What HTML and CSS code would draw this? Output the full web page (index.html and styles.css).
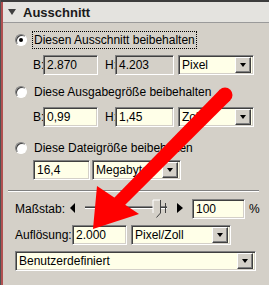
FILE: index.html
```html
<!DOCTYPE html>
<html>
<head>
<meta charset="utf-8">
<link rel="stylesheet" href="styles.css">
</head>
<body>
<div class="win">
  <div class="topbar"></div>
  <div class="panel">
    <div class="header">
      <span class="caret"></span>
      <span class="title">Ausschnitt</span>
    </div>
    <div class="body">
      <div class="radio-row r1">
        <span class="radio checked"></span>
        <span class="rlabel focus">Diesen Ausschnitt beibehalten</span>
      </div>
      <div class="frow f1">
        <span class="key">B:</span>
        <span class="field dis wb">2.870</span>
        <span class="key kh">H:</span>
        <span class="field dis wh">4.203</span>
        <span class="select ws"><span class="val">Pixel</span><span class="btn"></span></span>
      </div>

      <div class="radio-row r2">
        <span class="radio"></span>
        <span class="rlabel">Diese Ausgabegröße beibehalten</span>
      </div>
      <div class="frow f2">
        <span class="key">B:</span>
        <span class="field wb">0,99</span>
        <span class="key kh">H:</span>
        <span class="field wh">1,45</span>
        <span class="select ws"><span class="val">Zoll</span><span class="btn"></span></span>
      </div>

      <div class="radio-row r3">
        <span class="radio"></span>
        <span class="rlabel">Diese Dateigröße beibehalten</span>
      </div>
      <div class="frow f3">
        <span class="field wfs">16,4</span>
        <span class="select wms"><span class="val">Megabytes</span><span class="btn"></span></span>
      </div>

      <div class="sep"></div>

      <div class="crow c1">
        <span class="clabel">Maßstab:</span>
        <svg class="slider" width="120" height="20" viewBox="0 0 120 20">
          <polygon points="8,4 8,14 3,9" fill="#000"/>
          <rect x="18" y="7" width="82" height="1" fill="#808080"/>
          <rect x="18" y="8" width="82" height="1" fill="#404040"/>
          <rect x="18" y="9" width="82" height="1" fill="#ffffff"/>
          <rect x="98" y="4" width="1" height="10" fill="#404040"/>
          <polygon points="86,1 93,1 93,14 89.5,18 86,14" fill="#d4d0c8"/>
          <polyline points="86,14 86,1 93,1" fill="none" stroke="#ffffff" stroke-width="1"/>
          <polyline points="93.5,1 93.5,14 89.5,18.5" fill="none" stroke="#404040" stroke-width="1"/>
          <polygon points="110,4 110,14 116,9" fill="#000"/>
        </svg>
        <span class="field wz">100</span>
        <span class="pct">%</span>
      </div>

      <div class="crow c2">
        <span class="clabel2">Auflösung:</span>
        <span class="field wa">2.000</span>
        <span class="select wp"><span class="val">Pixel/Zoll</span><span class="btn"></span></span>
      </div>

      <div class="crow c3">
        <span class="select wfull"><span class="val">Benutzerdefiniert</span><span class="btn"></span></span>
      </div>
    </div>
  </div>
  <svg class="arrow" width="269" height="285" viewBox="0 0 269 285">
    <circle cx="225" cy="95" r="7.5" fill="#ff0000"/>
    <polygon points="219.7,89.7 230.3,100.3 123,207 114,198" fill="#ff0000"/>
    <polygon points="97,186 139,214 93,229" fill="#ff0000"/>
  </svg>
</div>
</body>
</html>
```

FILE: styles.css
```css
* { box-sizing: border-box; }
html, body { margin: 0; padding: 0; }
body {
  width: 269px;
  height: 285px;
  overflow: hidden;
  background: #d4d0c8;
  font-family: "Liberation Sans", Arial, sans-serif;
  font-size: 12px;
  color: #000;
}
.win {
  position: relative;
  height: 285px;
  border-left: 1px solid #505050;
}
.topbar {
  height: 2px;
  background: #3c3c3c;
}
.panel {
  height: 283px;
  border-left: 2px solid #b05050;
}
.header {
  height: 21px;
  background: #e4e3df;
  border-bottom: 1px solid #9a9a9a;
  display: flex;
  align-items: center;
  padding-left: 5px;
}
.caret {
  width: 0;
  height: 0;
  border-left: 4px solid transparent;
  border-right: 4px solid transparent;
  border-top: 6px solid #404040;
  margin-right: 7px;
}
.title {
  font-weight: bold;
  font-size: 13px;
  color: #1a1a1a;
}
.radio-row {
  display: flex;
  align-items: center;
  height: 18px;
  padding-left: 12px;
}
.r1 { margin-top: 8px; }
.r2 { margin-top: 8px; }
.r3 { margin-top: 12px; }
.radio {
  width: 12px;
  height: 12px;
  border-radius: 50%;
  background: #fff;
  border: 1px solid;
  border-color: #808080 #ffffff #ffffff #808080;
  box-shadow: inset 1px 1px 0 #404040;
  display: flex;
  align-items: center;
  justify-content: center;
}
.radio.checked::after {
  content: "";
  width: 4px;
  height: 4px;
  border-radius: 50%;
  background: #000;
}
.rlabel {
  margin-left: 5px;
  padding: 0 1px;
  border: 1px dotted transparent;
  height: 18px;
  line-height: 16px;
}
.rlabel.focus { border-color: #000; }
.frow {
  display: flex;
  align-items: center;
  height: 20px;
  padding-left: 30px;
}
.f1 { margin-top: 6px; }
.f2 { margin-top: 6px; }
.f3 { margin-top: 3px; }
.key { width: 10px; }
.kh { margin-left: 7px; }
.field, .select {
  height: 20px;
  border: 1px solid;
  border-color: #808080 #ffffff #ffffff #808080;
  box-shadow: inset 1px 1px 0 #404040, inset -1px -1px 0 #d4d0c8;
  background: #ffffe8;
  display: flex;
  align-items: center;
  padding-left: 3px;
}
.field.dis { background: #d4d0c8; }
.select {
  justify-content: space-between;
  padding: 2px 2px 2px 3px;
}
.btn {
  width: 16px;
  height: 16px;
  background: #d4d0c8;
  border: 1px solid;
  border-color: #ffffff #404040 #404040 #ffffff;
  box-shadow: inset -1px -1px 0 #808080;
  display: flex;
  align-items: center;
  justify-content: center;
}
.btn::after {
  content: "";
  width: 0;
  height: 0;
  border-left: 3.5px solid transparent;
  border-right: 3.5px solid transparent;
  border-top: 4px solid #000;
}
.wb { width: 55px; }
.wh { width: 59px; }
.ws { width: 76px; margin-left: 4px; }
.wfs { width: 57px; }
.wms { width: 89px; margin-left: 2px; }
.sep {
  margin: 10px 10px 0 5px;
  height: 2px;
  border-top: 1px solid #808080;
  border-bottom: 1px solid #ffffff;
}
.crow {
  display: flex;
  align-items: center;
  height: 20px;
  padding-left: 12px;
}
.c1 { margin-top: 7px; }
.c2 { margin-top: 6px; }
.c3 { margin-top: 6px; }
.clabel { width: 52px; }
.clabel2 { width: 57px; }
.slider { display: block; }
.wz { width: 53px; margin-left: 5px; }
.pct { margin-left: 4px; }
.wa { width: 55px; }
.wp { width: 100px; margin-left: 4px; }
.wfull { width: 241px; }
.arrow {
  position: absolute;
  left: -1px;
  top: 0;
  pointer-events: none;
}
```
